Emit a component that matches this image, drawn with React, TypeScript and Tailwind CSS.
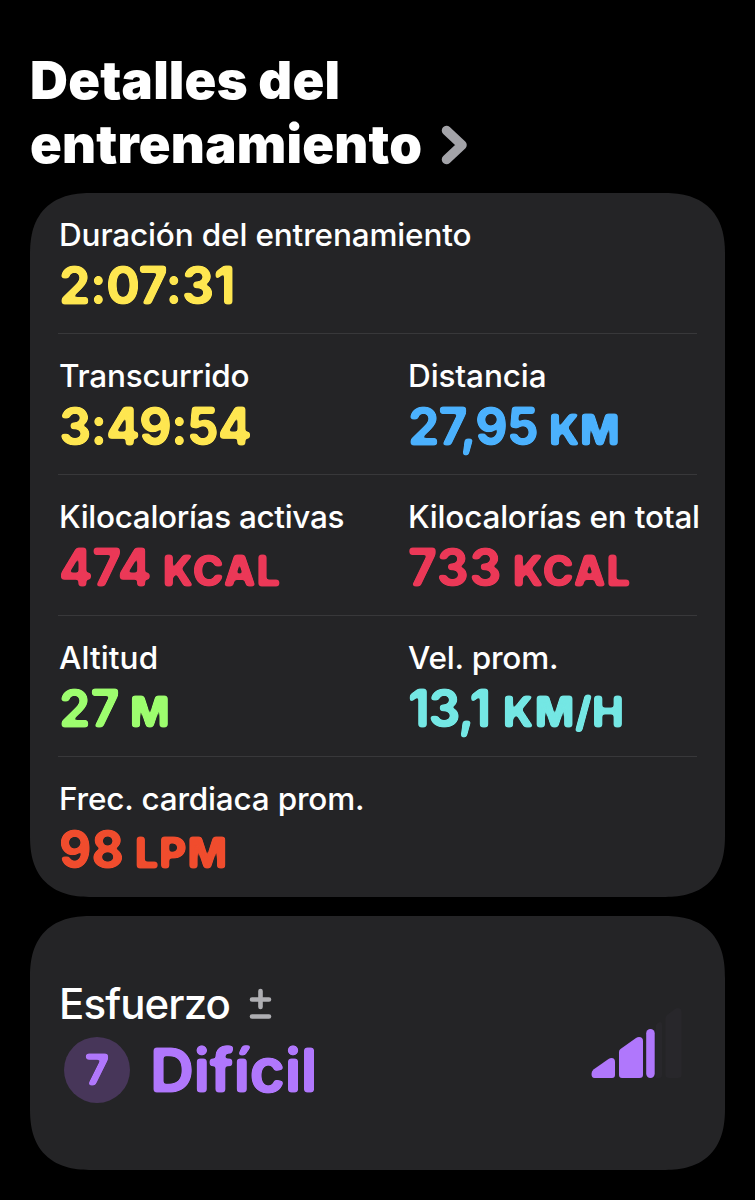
import React from "react";

type MetricProps = {
  label: string;
  labelClass?: string;
  value: string;
  valueClass: string;
  color: string;
  unit?: string;
  unitClass?: string;
};

function Metric({ label, labelClass = "", value, valueClass, color, unit, unitClass = "" }: MetricProps) {
  return (
    <div className="flex w-[349px] shrink-0 flex-col whitespace-nowrap">
      <span className={`h-[38px] self-start text-[31.5px] leading-[39px] font-medium text-white ${labelClass}`}>{label}</span>
      <div className={`flex h-[64px] items-baseline self-start text-[52.500px] leading-[64px] font-bold [filter:url(#soft-corners)] ${color}`}>
        <span className={`inline-block origin-left scale-x-95 ${valueClass}`}>{value}</span>
        {unit && <span className={`text-[42px] font-extrabold ${unitClass}`}>{unit}</span>}
      </div>
    </div>
  );
}

function Row({ children, last = false }: { children: React.ReactNode; last?: boolean }) {
  return (
    <div className={`flex h-[141px] pt-[22px] pl-px ${last ? "" : "border-b border-[#38383a]"}`}>{children}</div>
  );
}

function EffortBars() {
  return (
    <svg width="94" height="72" viewBox="0 0 94 72" aria-hidden="true">
      <g fill="#b077fc">
        <path d="M4.500 70H22Q25 70 25 67V54Q25 50 21.500 50Q20 50 18.500 51L3.500 61.500Q1.500 63 1.500 66Q1.500 70 4.500 70Z" />
        <path d="M32 70H49.500Q53 70 53 67V33Q53 29 49 29Q47.500 29 46 30L30.500 41Q29 42 29 44V67Q29 70 32 70Z" />
        <rect x="56.200" y="21" width="8.500" height="49" rx="4.200" />
      </g>
      <g fill="#28272b">
        <path d="M66 17Q67 15 70 14Q72 14 72 17V67Q72 70 69 70H66Z" />
        <path d="M79 70H88Q91.500 70 91.500 67V4Q91.500 0 88 0Q86 0 85 1L77 7Q75.500 8.500 75.500 10V67Q75.500 70 79 70Z" />
      </g>
    </svg>
  );
}

export default function App() {
  return (
    <main className="flex h-[1200px] w-[755px] flex-col bg-black pl-[30px] font-['Inter',sans-serif]">
      <svg width="0" height="0" className="absolute" aria-hidden="true">
        <filter id="soft-corners" x="-5%" y="-5%" width="110%" height="110%" colorInterpolationFilters="sRGB">
          <feGaussianBlur stdDeviation="1.7" />
          <feComponentTransfer>
            <feFuncA type="linear" slope="5" intercept="-1.400" />
          </feComponentTransfer>
        </filter>
      </svg>

      <h1 className="h-[193px] pt-[48px] text-[52.500px] leading-[64px] font-black whitespace-nowrap text-white">
        <span className="block tracking-[0.2px]">Detalles del</span>
        <span className="flex items-center">
          <span className="tracking-[0.2px]">entrenamiento</span>
          <svg width="27" height="40" viewBox="0 0 27 40" className="relative top-[0.5px] ml-[19px]" fill="none" aria-hidden="true">
            <path d="M5.500 5.500L21 20L5.500 34.500" stroke="#a3a3a8" strokeWidth="9.500" strokeLinecap="round" strokeLinejoin="round" />
          </svg>
        </span>
      </h1>

      <section className="h-[704px] w-[695px] shrink-0 rounded-[56px] bg-[#242426] pl-[28px] supports-[corner-shape:squircle]:rounded-[62px] supports-[corner-shape:squircle]:[corner-shape:superellipse(1.3)]">
        <div className="w-[639px]">
          <Row>
            <Metric label="Duración del entrenamiento" labelClass="tracking-[-0.15px]" value="2:07:31" valueClass="tracking-[-0.4px]" color="text-[#fee650]" />
          </Row>
          <Row>
            <Metric label="Transcurrido" labelClass="tracking-[-0.25px]" value="3:49:54" valueClass="tracking-[-0.8px]" color="text-[#fee650]" />
            <Metric label="Distancia" labelClass="tracking-[-0.1px]" value="27,95" valueClass="tracking-[-1px]" unit="KM" unitClass="ml-[4.500px]" color="text-[#4bb1fd]" />
          </Row>
          <Row>
            <Metric label="Kilocalorías activas" labelClass="tracking-[-0.32px]" value="474" valueClass="tracking-[-0.6px]" unit="KCAL" unitClass="ml-[7px] tracking-[0.8px]" color="text-[#eb3857]" />
            <Metric label="Kilocalorías en total" labelClass="tracking-[-0.2px]" value="733" valueClass="tracking-[0.4px]" unit="KCAL" unitClass="ml-[6px] tracking-[0.8px]" color="text-[#eb3857]" />
          </Row>
          <Row>
            <Metric label="Altitud" labelClass="tracking-[0.1px]" value="27" valueClass="tracking-[0px]" unit="M" unitClass="ml-[7.500px]" color="text-[#9dfd6e]" />
            <Metric label="Vel. prom." labelClass="tracking-[-0.2px]" value="13,1" valueClass="tracking-[-1.2px]" unit="KM/H" unitClass="ml-[9px] tracking-[0.6px]" color="text-[#74e7e4]" />
          </Row>
          <Row last>
            <Metric label="Frec. cardiaca prom." labelClass="tracking-[-0.2px]" value="98" valueClass="tracking-[0.2px]" unit="LPM" unitClass="ml-[7px] tracking-[0.8px]" color="text-[#f04c2d]" />
          </Row>
        </div>
      </section>

      <section className="mt-[19px] flex h-[254px] w-[695px] shrink-0 justify-between rounded-[56px] bg-[#242426] pr-[41px] pl-[29px] supports-[corner-shape:squircle]:rounded-[62px] supports-[corner-shape:squircle]:[corner-shape:superellipse(1.3)]">
        <div className="flex flex-col pt-[62px]">
          <div className="flex h-[52px] items-center text-[42px] leading-[52px] font-medium text-white">
            <span className="tracking-[-0.9px]">Esfuerzo</span>
            <svg width="23" height="32" viewBox="0 0 23 32" className="ml-[19px]" fill="none" stroke="#aeaeb2" strokeWidth="4.600" strokeLinecap="round" aria-hidden="true">
              <path d="M11.500 3V19M3 11.500H20M3 28.500H20" />
            </svg>
          </div>
          <div className="mt-[7px] flex items-center pl-[5px] text-[#b077fc]">
            <div className="flex size-[66px] items-center justify-center rounded-full bg-[#473659]">
              <span className="text-[42px] leading-[48px] font-bold [filter:url(#soft-corners)]">7</span>
            </div>
            <span className="ml-[20px] text-[61px] leading-[66px] font-bold tracking-[-0.6px] [filter:url(#soft-corners)]">Difícil</span>
          </div>
        </div>
        <div className="pt-[92px]">
          <EffortBars />
        </div>
      </section>
    </main>
  );
}
